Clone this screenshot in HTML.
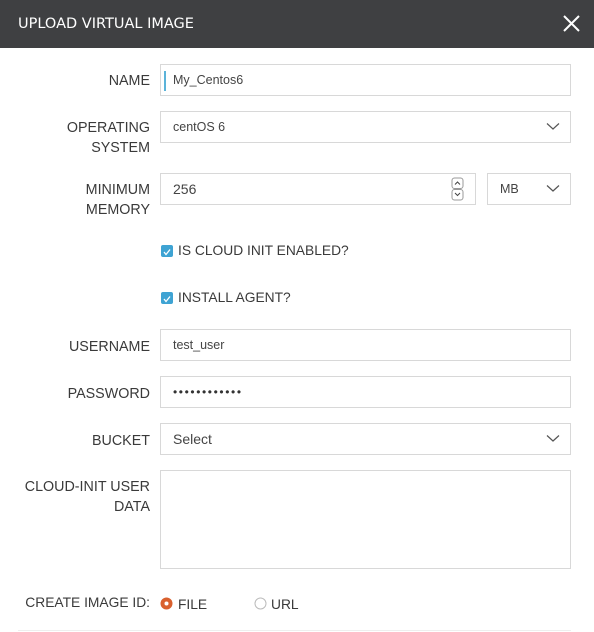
<!DOCTYPE html>
<html><head><meta charset="utf-8"><style>
*{margin:0;padding:0;box-sizing:border-box}
body{width:594px;height:632px;background:#fff;font-family:"Liberation Sans",sans-serif;position:relative;overflow:hidden;color:#333}
.hdr{position:absolute;left:0;top:0;width:594px;height:48px;background:#3f4042;color:#fff;font-family:"DejaVu Sans",sans-serif;font-size:14.5px;line-height:48px;padding-left:18px}
.x{position:absolute;right:14px;top:15px}
.lbl{position:absolute;right:444px;text-align:right;font-size:14.3px;line-height:20px;color:#3a3a3a;white-space:nowrap}
.box{position:absolute;border:1px solid #d8d8d8;background:#fff;font-size:12.5px;color:#444;line-height:30px;padding-left:12px}
.chev{position:absolute;right:10px;top:10px}
.cb{position:absolute;left:161px;width:12px;height:12px;border-radius:2px;background:#3ea3d3}
.cbl{position:absolute;left:178px;font-size:13.8px;color:#3a3a3a;line-height:16px}
</style></head><body>
<div class="hdr">UPLOAD VIRTUAL IMAGE
<svg class="x" width="17" height="17" viewBox="0 0 17 17"><path d="M1 1L16 16M16 1L1 16" stroke="#fff" stroke-width="2"/></svg></div>

<div class="lbl" style="top:71px">NAME</div>
<div class="box" style="left:160px;top:64px;width:411px;height:32px">My_Centos6<div style="position:absolute;left:3px;top:6px;width:2px;height:20px;background:#5bb3d9"></div></div>

<div class="lbl" style="top:118px">OPERATING<br>SYSTEM</div>
<div class="box" style="left:160px;top:111px;width:411px;height:32px">centOS 6<svg class="chev" width="14" height="9" viewBox="0 0 14 9"><path d="M1 1.5L7 7L13 1.5" stroke="#555" fill="none" stroke-width="1.2"/></svg></div>

<div class="lbl" style="top:180px">MINIMUM<br>MEMORY</div>
<div class="box" style="left:160px;top:173px;width:316px;height:32px;font-size:14px">256
<svg style="position:absolute;left:290px;top:3px" width="13" height="24" viewBox="0 0 13 24"><rect x="1" y="1" width="11" height="10.5" rx="2.5" fill="none" stroke="#999"/><rect x="1" y="12.5" width="11" height="10.5" rx="2.5" fill="none" stroke="#999"/><path d="M4 7.5L6.5 5L9 7.5M4 16L6.5 18.5L9 16" stroke="#444" fill="none"/></svg></div>
<div class="box" style="left:487px;top:173px;width:84px;height:32px">MB<svg class="chev" width="14" height="9" viewBox="0 0 14 9"><path d="M1 1.5L7 7L13 1.5" stroke="#555" fill="none" stroke-width="1.2"/></svg></div>

<div class="cb" style="top:245px"><svg width="12" height="12" viewBox="0 0 12 12"><path d="M3 6L5 8.5L9 3.5" stroke="#fff" fill="none" stroke-width="1.3"/></svg></div>
<div class="cbl" style="top:243px">IS CLOUD INIT ENABLED?</div>
<div class="cb" style="top:292px"><svg width="12" height="12" viewBox="0 0 12 12"><path d="M3 6L5 8.5L9 3.5" stroke="#fff" fill="none" stroke-width="1.3"/></svg></div>
<div class="cbl" style="top:290px">INSTALL AGENT?</div>

<div class="lbl" style="top:337px">USERNAME</div>
<div class="box" style="left:160px;top:329px;width:411px;height:32px">test_user</div>
<div class="lbl" style="top:384px">PASSWORD</div>
<div class="box" style="left:160px;top:376px;width:411px;height:32px;font-size:12px;letter-spacing:1.6px;color:#333">••••••••••••</div>
<div class="lbl" style="top:431px">BUCKET</div>
<div class="box" style="left:160px;top:423px;width:411px;height:32px;font-size:14px">Select<svg class="chev" width="14" height="9" viewBox="0 0 14 9"><path d="M1 1.5L7 7L13 1.5" stroke="#555" fill="none" stroke-width="1.2"/></svg></div>

<div class="lbl" style="top:477px">CLOUD-INIT USER<br>DATA</div>
<div class="box" style="left:160px;top:470px;width:411px;height:99px"></div>

<div class="lbl" style="top:593px;right:444px;font-size:13.8px">CREATE IMAGE ID:</div>
<svg style="position:absolute;left:160px;top:597px" width="13" height="13" viewBox="0 0 13 13"><circle cx="6.5" cy="6.5" r="6" fill="#d9602e"/><circle cx="6.5" cy="6.5" r="2" fill="#fff"/></svg>
<div class="cbl" style="top:597px">FILE</div>
<svg style="position:absolute;left:254px;top:597px" width="13" height="13" viewBox="0 0 13 13"><circle cx="6.5" cy="6.5" r="5.5" fill="#fff" stroke="#bbb"/></svg>
<div class="cbl" style="top:597px;left:271px">URL</div>
<div style="position:absolute;left:18px;top:630px;width:553px;height:1px;background:#eee"></div>
</body></html>
